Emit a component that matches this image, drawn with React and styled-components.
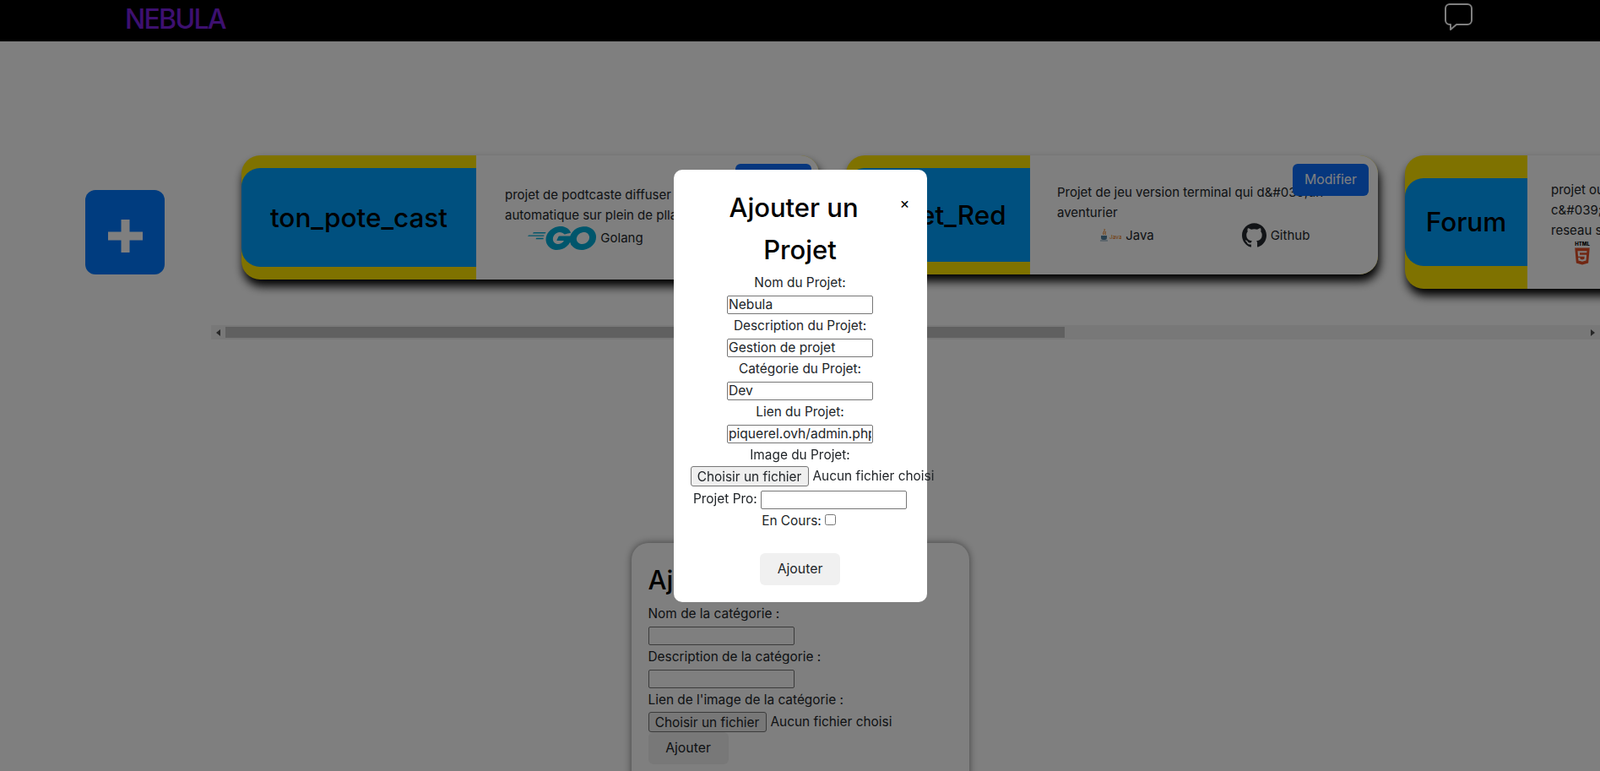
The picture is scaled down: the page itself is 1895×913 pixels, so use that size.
import React from "react";
import styled, { createGlobalStyle } from "styled-components";
import { SiGo, SiGithub, SiHtml5 } from "react-icons/si";

const GlobalStyle = createGlobalStyle`
  html, body {
    margin: 0;
    height: 100%;
    overflow: hidden;
  }
  body {
    background: #fff;
    color: #212529;
    font-family: Inter, "Noto Sans", sans-serif;
    font-size: 15.4px;
    line-height: 24px;
  }
  * {
    box-sizing: border-box;
  }
`;

const Navbar = styled.nav`
  display: flex;
  align-items: flex-start;
  justify-content: space-between;
  height: 49px;
  padding: 4px 151px 0 148px;
  background: #000;
`;

const Logo = styled.span`
  color: #7a20e0;
  font-size: 32px;
  line-height: 38px;
  font-weight: 500;
  letter-spacing: -1.7px;
`;

const ChatIcon = styled.svg`
  width: 33px;
  height: 32px;
  fill: none;
  stroke: #fff;
  stroke-width: 2;
  stroke-linejoin: round;
`;

const Main = styled.main`
  padding-top: 125px;
`;

const ProjectsRow = styled.section`
  display: flex;
  align-items: flex-start;
`;

const AddColumn = styled.div`
  flex: 0 0 250px;
  padding: 51px 0 0 101px;
`;

const AddButton = styled.button`
  display: flex;
  align-items: center;
  justify-content: center;
  width: 94px;
  height: 100px;
  padding: 9px 0 0;
  border: 0;
  border-radius: 12px;
  background: #0078ff;

  svg {
    width: 41px;
    height: 39px;
    fill: #fff;
  }
`;

const Scroller = styled.div`
  flex: 1;
  min-width: 0;
  overflow: hidden;
`;

const CardTrack = styled.div`
  display: flex;
  align-items: flex-start;
  gap: 32px;
  width: 2668px;
  padding: 10px 0 43px 36px;
`;

const ScrollBar = styled.div`
  display: flex;
  align-items: center;
  justify-content: space-between;
  height: 17px;
  background: #f1f1f1;
`;

const ScrollArrow = styled.span`
  display: flex;
  flex: 0 0 17px;
  align-items: center;
  justify-content: center;

  &::before {
    content: "";
    border-style: solid;
    border-color: transparent;
    border-width: 4px 0;
    ${p => (p.$right ? "border-left: 5px solid #505050;" : "border-right: 5px solid #505050;")}
  }
`;

const ScrollThumb = styled.span`
  flex: 0 0 994px;
  height: 13px;
  margin-right: auto;
  background: #c1c1c1;
`;

const Card = styled.article`
  position: relative;
  display: flex;
  flex: 0 0 ${p => p.$width}px;
  min-width: 0;
  height: ${p => p.$height}px;
  border-radius: 22px;
  background: #ffe400;
  box-shadow: 2px 8px 12px #000;
`;

const CardHead = styled.div`
  display: flex;
  flex: 0 0 ${p => p.$width}px;
  align-items: stretch;
  padding: ${p => p.$band}px 0;
`;

const CardTitle = styled.h3`
  display: flex;
  flex: 1;
  align-items: center;
  justify-content: center;
  margin: 0;
  border-radius: 22px 0 0 22px;
  background: #00a0ff;
  color: #000;
  font-size: 31.5px;
  font-weight: 500;
`;

const CardBody = styled.div`
  display: flex;
  flex: 1;
  flex-direction: column;
  justify-content: center;
  min-width: 0;
  padding-left: ${p => p.$pad}px;
  border-radius: 0 22px 22px 0;
  background: #fff;
  font-size: 15px;
`;

const DescLine = styled.span`
  display: block;
  white-space: nowrap;
`;

const TechRow = styled.div`
  display: grid;
  grid-template-columns: repeat(2, ${p => p.$col}px);
  margin-left: ${p => p.$shift || 0}px;
`;

const Tech = styled.div`
  display: flex;
  align-items: center;
  justify-content: center;
  gap: 5px;
`;

const GoLogo = styled(SiGo)`
  width: 81px;
  height: 30px;
  color: #00add8;
`;

const GithubLogo = styled(SiGithub)`
  width: 29px;
  height: 29px;
  color: #24292e;
`;

const JavaLogo = styled.svg`
  width: 25px;
  height: 15px;
  text {
    fill: #e76f00;
    font-size: 6.5px;
    font-family: Inter, sans-serif;
  }
`;

const HtmlBadge = styled.div`
  display: flex;
  flex-direction: column;
  align-items: center;
  color: #000;
  font-size: 6px;
  line-height: 8px;
  font-weight: 800;

  svg {
    width: 20px;
    height: 21px;
    color: #e34f26;
  }
`;

const EditButton = styled.button`
  position: absolute;
  top: 10px;
  right: ${p => p.$right}px;
  width: 90px;
  height: 38px;
  border: 0;
  border-radius: 6px;
  background: #0d6efd;
  color: #fff;
  font: inherit;
  font-size: 15.8px;
`;

const CategoryCard = styled.section`
  width: 400px;
  margin: 241px auto 0;
  padding: 20px 20px 40px;
  border-radius: 20px;
  box-shadow: 0 0 10px rgba(0, 0, 0, 0.5);
`;

const CategoryTitle = styled.h2`
  margin: 0 0 4px;
  color: #000;
  font-size: 31px;
  line-height: 48px;
  font-weight: 500;
`;

const TextInput = styled.input`
  width: 173px;
  height: 22px;
  padding: 1px;
  margin: 3px 0 2px;
  border: 1px solid #767676;
  border-radius: 2px;
  background: #fff;
  color: #212529;
  font: inherit;
  font-size: 15.6px;
  vertical-align: middle;
`;

const FileField = styled.div`
  display: flex;
  align-items: center;
  gap: 5px;
  width: 300px;
  height: 24px;
  margin: ${p => (p.$modal ? "1px 0 2px" : "2px 0 0")};
  text-align: left;
  white-space: nowrap;
`;

const FileButton = styled.button`
  width: 140px;
  height: 24px;
  padding: 0;
  border: 1px solid #767676;
  border-radius: 3px;
  background: #efefef;
  color: #212529;
  font: inherit;
`;

const SubmitButton = styled.button`
  display: block;
  width: 95px;
  height: 38px;
  margin: ${p => (p.$center ? "26px auto 0" : "0")};
  border: 0;
  border-radius: 6px;
  background: #f0f0f0;
  color: #212529;
  font: inherit;
  font-size: 15.8px;
`;

const Overlay = styled.div`
  position: fixed;
  inset: 0;
  display: flex;
  align-items: center;
  justify-content: center;
  background: rgba(0, 0, 0, 0.5);
`;

const Modal = styled.div`
  width: 300px;
  padding: 20px;
  border-radius: 10px;
  background: #fff;
  text-align: center;
`;

const CloseButton = styled.span`
  float: right;
  width: 15px;
  margin-top: 6px;
  color: #000;
  font-size: 18px;
  line-height: 28px;
  text-align: right;
`;

const ModalTitle = styled.h2`
  margin: 0 0 2px;
  color: #000;
  font-size: 31px;
  line-height: 50px;
  font-weight: 500;
`;

const projects = [
  {
    name: "ton_pote_cast",
    width: 684,
    height: 147,
    head: 278,
    band: 15,
    pad: 34,
    col: 191,
    editRight: 9,
    lines: ["projet de podtcaste diffuser de façon", "automatique sur plein de pllateforme"],
    techs: [{ logo: <GoLogo viewBox="0 7.2 24 9.6" preserveAspectRatio="none" />, label: "Golang" }],
  },
  {
    name: "Projet_Red",
    width: 630,
    height: 141,
    head: 218,
    band: 15,
    pad: 32,
    col: 176,
    shift: -5,
    editRight: 11,
    lines: ["Projet de jeu version terminal qui d&#039;un", "aventurier"],
    techs: [
      {
        logo: (
          <JavaLogo viewBox="0 0 25 15">
            <path d="M5 0c1.500 2.500-2.500 3.500-1 7M6.500 3c-.5 1.500-1 2.500 0 4" fill="none" stroke="#e76f00" strokeWidth=".9" />
            <path d="M1 8h7v2.500a2.500 2.500 0 0 1-2.500 2.500h-2A2.500 2.500 0 0 1 1 10.500z" fill="#5382a1" />
            <path d="M0 14h9" stroke="#5382a1" strokeWidth=".8" />
            <text x="11" y="12">Java</text>
          </JavaLogo>
        ),
        label: "Java",
      },
      { logo: <GithubLogo />, label: "Github" },
    ],
  },
  {
    name: "Forum",
    width: 640,
    height: 158,
    head: 145,
    band: 27,
    pad: 28,
    col: 74,
    editRight: 11,
    lines: ["projet ouvert à tous", "c&#039;est un petit", "reseau social"],
    techs: [
      {
        logo: (
          <HtmlBadge>
            HTML
            <SiHtml5 />
          </HtmlBadge>
        ),
      },
    ],
  },
];

const App = () => {
  return (
    <>
      <GlobalStyle />
      <Navbar>
        <Logo>NEBULA</Logo>
        <ChatIcon viewBox="0 0 33 32">
          <path d="M6 1h21a5 5 0 0 1 5 5v14a5 5 0 0 1-5 5H14l-7 6v-6H6a5 5 0 0 1-5-5V6a5 5 0 0 1 5-5z" />
        </ChatIcon>
      </Navbar>
      <Main>
        <ProjectsRow>
          <AddColumn>
            <AddButton aria-label="Ajouter un projet">
              <svg viewBox="0 0 41 39">
                <path d="M15.5 0h10v14.500H41v10H25.500V39h-10V24.500H0v-10h15.500z" />
              </svg>
            </AddButton>
          </AddColumn>
          <Scroller>
            <CardTrack>
              {projects.map(project => (
                <Card key={project.name} $width={project.width} $height={project.height}>
                  <CardHead $width={project.head} $band={project.band}>
                    <CardTitle>{project.name}</CardTitle>
                  </CardHead>
                  <CardBody $pad={project.pad}>
                    <div>
                      {project.lines.map(line => (
                        <DescLine key={line}>{line}</DescLine>
                      ))}
                    </div>
                    <TechRow $col={project.col} $shift={project.shift}>
                      {project.techs.map((tech, i) => (
                        <Tech key={i}>
                          {tech.logo}
                          {tech.label}
                        </Tech>
                      ))}
                    </TechRow>
                  </CardBody>
                  <EditButton $right={project.editRight}>Modifier</EditButton>
                </Card>
              ))}
            </CardTrack>
            <ScrollBar>
              <ScrollArrow />
              <ScrollThumb />
              <ScrollArrow $right />
            </ScrollBar>
          </Scroller>
        </ProjectsRow>
        <CategoryCard>
          <CategoryTitle>Ajouter une catégorie</CategoryTitle>
          <label>Nom de la catégorie :</label>
          <br />
          <TextInput />
          <br />
          <label>Description de la catégorie :</label>
          <br />
          <TextInput />
          <br />
          <label>Lien de l'image de la catégorie :</label>
          <FileField>
            <FileButton>Choisir un fichier</FileButton>
            Aucun fichier choisi
          </FileField>
          <SubmitButton>Ajouter</SubmitButton>
        </CategoryCard>
      </Main>
      <Overlay>
        <Modal>
          <CloseButton>×</CloseButton>
          <ModalTitle>Ajouter un Projet</ModalTitle>
          <label>Nom du Projet:</label>
          <br />
          <TextInput defaultValue="Nebula" />
          <br />
          <label>Description du Projet:</label>
          <br />
          <TextInput defaultValue="Gestion de projet" />
          <br />
          <label>Catégorie du Projet:</label>
          <br />
          <TextInput defaultValue="Dev" />
          <br />
          <label>Lien du Projet:</label>
          <br />
          <TextInput defaultValue="piquerel.ovh/admin.php" />
          <br />
          <label>Image du Projet:</label>
          <FileField $modal>
            <FileButton>Choisir un fichier</FileButton>
            Aucun fichier choisi
          </FileField>
          <label>Projet Pro: </label>
          <TextInput />
          <br />
          <label>En Cours:</label>
          <input type="checkbox" />
          <SubmitButton $center>Ajouter</SubmitButton>
        </Modal>
      </Overlay>
    </>
  );
};

export default App;
